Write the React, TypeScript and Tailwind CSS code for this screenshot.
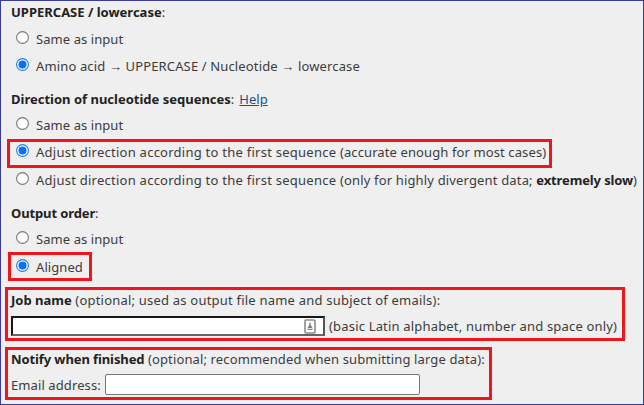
import type { ReactNode } from "react";

function Radio({ checked = false }: { checked?: boolean }) {
  return (
    <svg width="13" height="13" viewBox="0 0 13 13" className="mr-[7px] mb-[3px] shrink-0">
      <circle cx="6.5" cy="6.5" r="5.9" fill="#fff" stroke={checked ? "#1c7cf2" : "#777"} strokeWidth="1.1" />
      {checked && <circle cx="6.5" cy="6.5" r="4" fill="#0873f5" />}
    </svg>
  );
}

function Option({ checked, children }: { checked?: boolean; children: ReactNode }) {
  return (
    <label className="flex h-[26px] items-center pl-[15px]">
      <Radio checked={checked} />
      {children}
    </label>
  );
}

function T({ className = "", children }: { className?: string; children: ReactNode }) {
  return <span className={"whitespace-pre " + className}>{children}</span>;
}

export default function App() {
  return (
    <div className="flex h-[405px] w-[644px] flex-col items-start overflow-hidden border border-[#3c3c98] bg-[#efefef] font-['Noto_Sans',sans-serif] text-[13px] leading-[20px] text-[#3c3c3c]">
      <div className="mt-px pl-[10px]"><T><b className="text-[#222]">UPPERCASE / lowercase</b>:</T></div>
      <div className="mt-[4px]"><Option><T className="tracking-[0.07px]">Same as input</T></Option></div>
      <div className="mt-px"><Option checked><T className="tracking-[0.14px]">Amino acid → UPPERCASE / Nucleotide → lowercase</T></Option></div>
      <div className="mt-[10px] flex pl-[10px]">
        <T><b className="text-[#222]">Direction of nucleotide sequences</b>:</T>
        <a className="ml-[5px] text-[#1d5285] underline">Help</a>
      </div>
      <div className="mt-[3px]"><Option><T className="tracking-[0.07px]">Same as input</T></Option></div>
      <div className="mt-px ml-[6px] h-[29px] w-[545px] border-3 border-[#f0141c]">
        <div className="-ml-[9px] -mt-[3px]">
          <Option checked>
            <T className="tracking-[0.25px]">Adjust direction according to the first sequence </T>
            <T className="tracking-[0.11px]">(accurate enough for most cases)</T>
          </Option>
        </div>
      </div>
      <div className="-mt-px">
        <Option>
          <T className="tracking-[0.25px]">Adjust direction according to the first sequence </T>
          <T className="tracking-[0.16px]">(only for highly divergent data; </T>
          <T className="tracking-[-0.12px]"><b className="text-[#222]">extremely slow</b>)</T>
        </Option>
      </div>
      <div className="mt-[10px] pl-[10px]"><T className="tracking-[-0.12px]"><b className="text-[#222]">Output order</b>:</T></div>
      <div className="mt-[3px]"><Option><T className="tracking-[0.07px]">Same as input</T></Option></div>
      <div className="ml-[7px] h-[29px] w-[84px] border-3 border-[#f0141c]">
        <div className="-ml-[10px] -mt-px"><Option checked><T className="tracking-[0.07px]">Aligned</T></Option></div>
      </div>
      <div className="mt-[6px] ml-[4px] flex h-[54px] w-[620px] flex-col border-3 border-[#f0141c] pl-[3px]">
        <div className="flex">
          <T><b className="text-[#222]">Job name</b></T>
          <T className="tracking-[0.21px]"> (optional; used as output file name and subject of emails):</T>
        </div>
        <div className="mt-[6px] flex h-[20px] items-center">
          <div className="flex h-[20px] w-[314px] items-center justify-end border-2 border-t-[#181818] border-l-[#181818] border-r-[#555] border-b-[#666] bg-white pr-[7px]">
            <svg width="12" height="15" viewBox="0 0 12 15" fill="none">
              <rect x="1" y="1" width="10" height="13" rx="1" stroke="#8b8b8b" strokeWidth="1.6" />
              <path d="M6 3.5v3M4.5 8.5L6 6l1.5 2.5z" stroke="#777" strokeWidth="1.3" />
              <path d="M3.5 10.5h5" stroke="#888" />
            </svg>
          </div>
          <T className="ml-[4px] tracking-[0.18px]">(basic Latin alphabet, number and space only)</T>
        </div>
      </div>
      <div className="mt-[6px] ml-[4px] flex h-[53px] w-[487px] flex-col border-3 border-[#f0141c] pl-[3px]">
        <div className="-mt-px flex">
          <T className="tracking-[-0.1px]"><b className="text-[#222]">Notify when finished</b></T>
          <T className="tracking-[0.13px]"> (optional; recommended when submitting large data):</T>
        </div>
        <div className="mt-[5px] flex h-[21px] items-center">
          <div className="w-[94px] shrink-0"><T className="tracking-[0.1px]">Email address:</T></div>
          <div className="h-[21px] w-[315px] rounded-[2px] border border-[#777] bg-white" />
        </div>
      </div>
    </div>
  );
}
